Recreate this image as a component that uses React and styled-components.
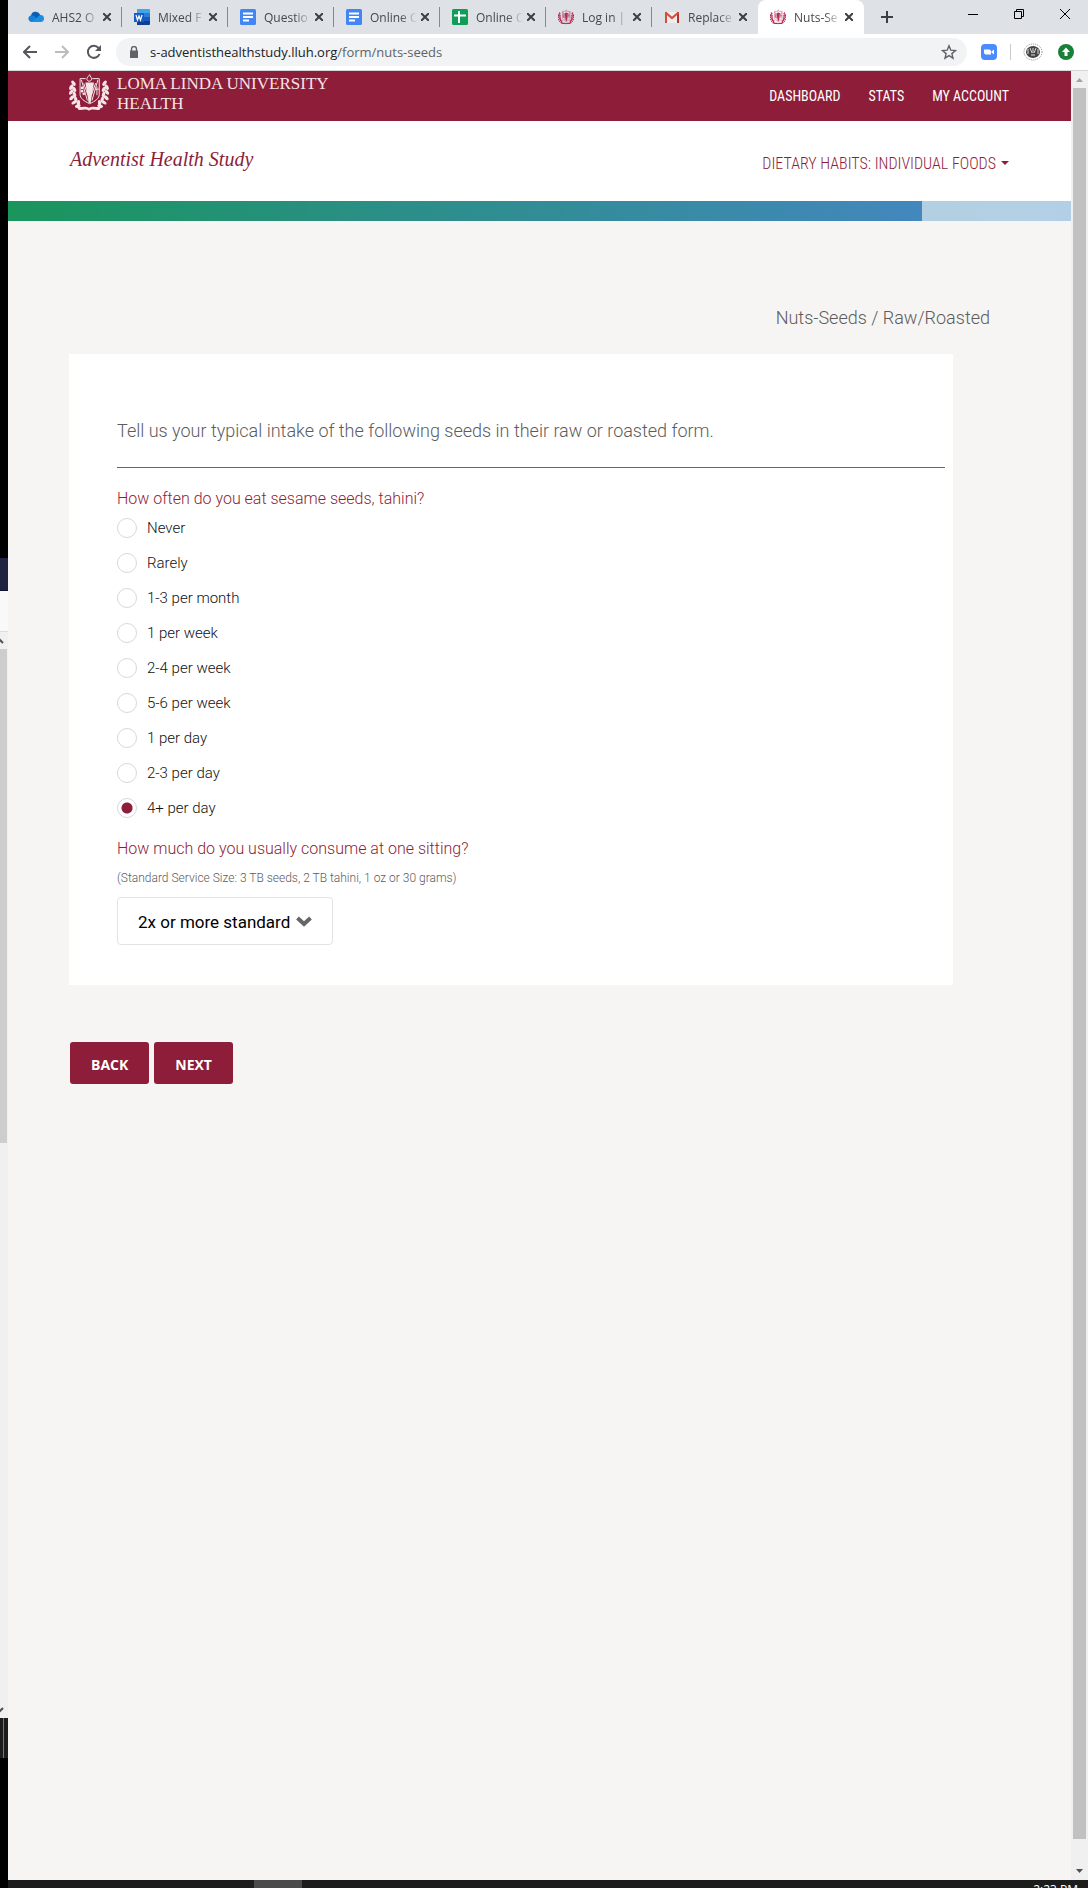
import React, { useState } from 'react';
import styled, { createGlobalStyle } from 'styled-components';

const maroon = '#8d1d38';
const uiFont = '"Open Sans", "Noto Sans", sans-serif';
const narrowFont = '"Liberation Sans Narrow", "Roboto Condensed", Roboto, sans-serif';

const GlobalStyle = createGlobalStyle`
  * {
    box-sizing: border-box;
  }

  body {
    margin: 0;
    background: #f6f5f3;
    font-family: Roboto, "Liberation Sans", sans-serif;
    color: #5c5c5c;
  }
`;

/* Desktop */

const Desktop = styled.div`
  display: grid;
  grid-template-columns: 8px minmax(0, 1fr);
  min-height: 100vh;
`;

const Behind = styled.div`
  display: flex;
  flex-direction: column;
  background: #000;
  overflow: hidden;
`;

const Slice = styled.div`
  height: ${props => props.$height}px;
  background: ${props => props.$color};
  border-bottom: ${props => (props.$line ? `1px solid ${props.$line}` : 'none')};
`;

const BehindThumb = styled(Slice)`
  border-right: 1px solid #f0f0f0;
`;

const BehindTask = styled(Slice)`
  border-left: 3px solid #1c1c1c;
  box-shadow: inset 1px 0 #777;
`;

const BehindArrow = styled.svg`
  display: block;
  flex: none;
  width: 8px;
  height: 17px;
  background: #f0f0f0;
`;

const Window = styled.div`
  display: flex;
  flex-direction: column;
`;

/* Browser chrome */

const TabStrip = styled.div`
  display: flex;
  height: 34px;
  padding-left: 8px;
  background: #dee1e6;
  font-family: ${uiFont};
  font-size: 12px;
`;

const Tab = styled.div`
  display: flex;
  flex: 0 1 106px;
  align-items: center;
  min-width: 0;
  padding: 0 11px 0 12px;
  border-radius: 8px 8px 0 0;
  color: #45494d;
  background: ${props => (props.$active ? '#fff' : 'transparent')};
`;

const TabLine = styled.span`
  align-self: center;
  width: 1px;
  height: 20px;
  margin-left: -1px;
  background: ${props => (props.$hidden ? 'transparent' : '#85888c')};
`;

const Favicon = styled.svg`
  flex: none;
  width: 16px;
  height: 16px;
`;

const TabTitle = styled.span`
  flex: 1;
  margin: 0 4px 0 8px;
  overflow: hidden;
  white-space: nowrap;
  mask-image: linear-gradient(to right, #000 65%, transparent);
`;

const IconButton = styled.button`
  display: flex;
  flex: none;
  align-items: center;
  justify-content: center;
  width: ${props => props.$width}px;
  height: ${props => props.$height || 28}px;
  padding: 0;
  border: 0;
  background: none;
  color: ${props => props.$color || '#5f6368'};
`;

const NewTab = styled(IconButton)`
  align-self: center;
  margin-left: 9px;
`;

const WindowControls = styled.div`
  display: flex;
  margin-left: auto;
`;

const Toolbar = styled.div`
  display: flex;
  align-items: center;
  height: 37px;
  padding: 0 8px 0 6px;
  border-bottom: 1px solid #d5d7da;
  background: #fff;
`;

const AddressBar = styled.div`
  display: flex;
  flex: 1;
  align-items: center;
  height: 28px;
  margin: 0 14px 0 6px;
  padding: 0 4px 0 12px;
  border-radius: 14px;
  background: #f1f3f4;
  font-family: ${uiFont};
  font-size: 13px;
`;

const Url = styled.span`
  flex: 1;
  margin-left: 10px;
  color: #5f6368;

  b {
    font-weight: 400;
    color: #202124;
  }
`;

const ToolbarLine = styled.span`
  width: 1px;
  height: 16px;
  margin: 0 12px 0 13px;
  background: #c8cacd;
`;

/* Page */

const Viewport = styled.div`
  display: flex;
  flex: 1;
`;

const Page = styled.div`
  flex: 1;
  min-width: 0;
`;

const Scrollbar = styled.div`
  display: flex;
  flex-direction: column;
  width: 17px;
  background: #f0f0f0;
`;

const ScrollThumb = styled.div`
  flex: 1;
  margin: 0 2px 24px;
  background: #c1c1c1;
`;

const Header = styled.header`
  display: flex;
  align-items: flex-start;
  justify-content: space-between;
  height: 50px;
  padding: 3px 62px 0 61px;
  background: ${maroon};
  color: #fff;
`;

const Brand = styled.a`
  display: flex;
  gap: 8px;
  color: #f5e4e8;
  text-decoration: none;
`;

const BrandName = styled.span`
  font-family: "Liberation Serif", serif;
  font-size: 17px;
  line-height: 20px;
`;

const Nav = styled.nav`
  display: flex;
  gap: 28px;
  padding-top: 12px;
  font-family: ${narrowFont};
  font-size: 14px;
  line-height: 20px;

  a {
    color: inherit;
    text-decoration: none;
  }
`;

const SubHeader = styled.div`
  display: flex;
  align-items: center;
  justify-content: space-between;
  height: 80px;
  padding: 0 62px 0 62px;
  background: #fff;
  color: ${maroon};
`;

const StudyName = styled.h1`
  margin: 0;
  padding-bottom: 4px;
  font-family: "Liberation Serif", serif;
  font-size: 20px;
  font-style: italic;
  font-weight: 400;
`;

const SectionButton = styled.button`
  display: flex;
  align-items: center;
  gap: 5px;
  padding: 4px 0 0;
  border: 0;
  background: none;
  color: inherit;
  font-family: ${narrowFont};
  font-size: 16px;
  font-weight: 300;
`;

const Progress = styled.div`
  height: 20px;
  background: linear-gradient(to right, #abd6c4, #b3cfe6);
`;

const ProgressFill = styled.div`
  height: 100%;
  background: linear-gradient(to right, #1a955c, #2a8f85 40%, #4387be);
`;

const Main = styled.main`
  padding: 84px 61px 60px;
`;

const Crumb = styled.p`
  margin: 0 20px 23px 0;
  font-size: 18px;
  font-weight: 300;
  line-height: 26px;
  text-align: right;
`;

const Card = styled.section`
  margin-right: 57px;
  padding: 64px 8px 40px 48px;
  background: #fff;
`;

const Intro = styled.p`
  margin: 0;
  padding-bottom: 23px;
  border-bottom: 1px solid #666;
  font-size: 18px;
  font-weight: 300;
  line-height: 26px;
`;

const Question = styled.fieldset`
  margin: 19px 0 12px;
  padding: 0;
  border: 0;
`;

const questionText = `
  display: block;
  padding: 0;
  color: ${maroon};
  font-size: 16px;
  font-weight: 300;
  line-height: 24px;
`;

const Legend = styled.legend`
  ${questionText}
`;

const SelectLabel = styled.label`
  ${questionText}
`;

const Choice = styled.label`
  display: flex;
  align-items: center;
  gap: 10px;
  height: 35px;
  color: #111;
  font-size: 15px;
  font-weight: 300;
`;

const Choices = styled.div`
  margin-top: -1px;
`;

const Radio = styled.input`
  appearance: none;
  width: 20px;
  height: 20px;
  margin: 0;
  border: 1px solid #d8d8d8;
  border-radius: 50%;
  background: #fff;

  &:checked {
    background: radial-gradient(circle, ${maroon} 5px, #fff 6px);
  }
`;

const Hint = styled.p`
  margin: 7px 0 9px;
  font-size: 12px;
  font-weight: 300;
  line-height: 20px;
`;

const SelectWrap = styled.div`
  position: relative;
  width: 216px;
  color: #666;

  svg {
    position: absolute;
    top: 19px;
    right: 21px;
    pointer-events: none;
  }
`;

const Select = styled.select`
  appearance: none;
  width: 100%;
  height: 48px;
  padding: 2px 36px 0 20px;
  border: 1px solid #e3e3e3;
  border-radius: 4px;
  background: #fff;
  color: #000;
  font-family: Roboto, sans-serif;
  font-size: 17px;
`;

const Actions = styled.div`
  display: flex;
  gap: 5px;
  margin: 57px 0 0 1px;
`;

const Button = styled.button`
  height: 42px;
  padding: 2px 21px 0;
  border: 0;
  border-radius: 3px;
  background: ${maroon};
  color: #fff;
  font-family: "Open Sans", sans-serif;
  font-size: 14px;
  font-weight: 700;
`;

const Taskbar = styled.div`
  display: flex;
  justify-content: space-between;
  height: 8px;
  padding: 0 10px 0 246px;
  overflow: hidden;
  background: #1c1c1c;
  color: #fff;
  font-family: ${uiFont};
  font-size: 12px;
  line-height: 20px;
`;

const TaskItem = styled.span`
  width: 48px;
  background: #4a4a4a;
`;

/* Icons */

const leaves = [
  [13, 28, -35], [6, 40, 25], [15, 46, -30], [6, 55, 35], [16, 62, -20],
  [8, 72, 45], [20, 77, -15], [15, 86, 60], [28, 88, 5], [26, 97, 75],
];

const Wreath = () => leaves.map(([x, y, turn]) => (
  <ellipse key={y} cx={x} cy={y} rx="5" ry="9" transform={`rotate(${turn} ${x} ${y})`} />
));

function Crest({ width, height, color, title }) {
  return (
    <svg width={width} height={height} viewBox="0 0 120 112" fill={color} role="img" aria-label={title}>
      <Wreath />
      <g transform="translate(120 0) scale(-1 1)"><Wreath /></g>
      <path d="M33 14h17M70 14h21v48c0 12-12 20-29 28-17-8-29-16-29-28V14" fill="none" stroke={color} strokeWidth="3" />
      <path d="M37 18l18 62M87 18L69 80M44 28l12 34M80 28L68 62" fill="none" stroke={color} strokeWidth="3" />
      <path d="M49 26h26l-10 62h-6z" />
      <path d="M57 21c-8-6 0-12 5-19 0 6 9 9 5 16-2 4-6 5-10 3z" fill="none" stroke={color} strokeWidth="3" />
      <path d="M84 38v26M79 46h11" fill="none" stroke={color} strokeWidth="3" />
      <circle cx="39" cy="42" r="4" />
      <circle cx="39" cy="52" r="4" />
      <circle cx="44" cy="60" r="4" />
      <path d="M22 98c12 6 22-3 38 4 16-7 26 2 38-4l-6 10c-10 3-20-4-32 3-12-7-22 0-32-3z" />
    </svg>
  );
}

const CloseIcon = () => (
  <svg width="8" height="8" viewBox="0 0 8 8" stroke="#3c4043" strokeWidth="2">
    <path d="M0 0l8 8M8 0l-8 8" />
  </svg>
);

const CloudIcon = () => (
  <Favicon viewBox="0 0 16 16">
    <path d="M3 6.500a4.800 4.800 0 0 1 9-1l1 3-7 4z" fill="#0a5eb5" />
    <path d="M3.500 13a3.400 3.400 0 1 1 2.500-6l7 5.500z" fill="#1480d8" />
    <path d="M12 6a3.500 3.500 0 0 1 1 7H3.500L9 8.500z" fill="#1c90e0" />
  </Favicon>
);

const WordIcon = () => (
  <Favicon viewBox="0 0 16 16">
    <path d="M3 0h12a1 1 0 0 1 1 1v4H3z" fill="#41a5ee" />
    <path d="M3 4h13v4H3z" fill="#2b7cd3" />
    <path d="M3 8h13v4H3z" fill="#185abd" />
    <path d="M3 12h13v3a1 1 0 0 1-1 1H3z" fill="#103f91" />
    <path d="M0 4h10v9H0z" fill="#185abd" />
    <path d="M2 6l1.500 5L5 7l1.500 4L8 6" fill="none" stroke="#fff" strokeWidth="1.200" />
  </Favicon>
);

const DocIcon = () => (
  <Favicon viewBox="0 0 16 16">
    <rect width="16" height="16" rx="1.500" fill="#4285f4" />
    <path d="M3 4.500h10M3 8h10M3 11.500h6" stroke="#fff" strokeWidth="1.800" />
  </Favicon>
);

const SheetIcon = () => (
  <Favicon viewBox="0 0 16 16">
    <rect width="16" height="16" rx="1.500" fill="#0f9d58" />
    <path d="M2 6.500h12M7 2v12" stroke="#fff" strokeWidth="2" />
  </Favicon>
);

const MailIcon = () => (
  <Favicon viewBox="0 0 16 16">
    <path d="M2 3h12v11H2z" fill="#eee" />
    <path d="M1 3h2v11H1z" fill="#d54b3d" />
    <path d="M13 3h2v11h-2z" fill="#b63524" />
    <path d="M1.500 3.500L8 9l6.500-5.500" fill="none" stroke="#dc4b3e" strokeWidth="2.200" />
  </Favicon>
);

const SchoolIcon = () => <Crest width="16" height="16" color="#b72b55" title="Loma Linda" />;

const tabs = [
  { title: 'AHS2 O', Icon: CloudIcon },
  { title: 'Mixed F', Icon: WordIcon },
  { title: 'Questio', Icon: DocIcon },
  { title: 'Online C', Icon: DocIcon },
  { title: 'Online C', Icon: SheetIcon },
  { title: 'Log in |', Icon: SchoolIcon },
  { title: 'Replace', Icon: MailIcon },
  { title: 'Nuts-Se', Icon: SchoolIcon, active: true },
];

const frequencies = [
  'Never',
  'Rarely',
  '1-3 per month',
  '1 per week',
  '2-4 per week',
  '5-6 per week',
  '1 per day',
  '2-3 per day',
  '4+ per day',
];

function BrowserBar() {
  return (
    <>
      <TabStrip>
        {tabs.map(({ title, Icon, active }, i) => (
          <React.Fragment key={i}>
            <Tab $active={active}>
              <Icon />
              <TabTitle>{title}</TabTitle>
              <IconButton $width={8} aria-label="Close tab"><CloseIcon /></IconButton>
            </Tab>
            <TabLine $hidden={i > 5} />
          </React.Fragment>
        ))}
        <NewTab $width={28} aria-label="New tab">
          <svg width="12" height="12" viewBox="0 0 12 12" stroke="#3c4043" strokeWidth="2"><path d="M6 0v12M0 6h12" /></svg>
        </NewTab>
        <WindowControls>
          <IconButton $width={46} aria-label="Minimize">
            <svg width="10" height="10" viewBox="0 0 10 10" stroke="#000"><path d="M0 5.500h10" /></svg>
          </IconButton>
          <IconButton $width={46} aria-label="Restore">
            <svg width="10" height="10" viewBox="0 0 10 10" stroke="#000" fill="none"><path d="M.5 2.500h7v7h-7zM2.500 2.500v-2h7v7h-2" /></svg>
          </IconButton>
          <IconButton $width={46} aria-label="Close">
            <svg width="10" height="10" viewBox="0 0 10 10" stroke="#000"><path d="M0 0l10 10M10 0L0 10" /></svg>
          </IconButton>
        </WindowControls>
      </TabStrip>
      <Toolbar>
        <IconButton $width={32} aria-label="Back">
          <svg width="14" height="14" viewBox="0 0 14 14" stroke="#55585c" strokeWidth="2" fill="none"><path d="M14 7H1M7 1L1 7l6 6" /></svg>
        </IconButton>
        <IconButton $width={32} aria-label="Forward">
          <svg width="14" height="14" viewBox="0 0 14 14" stroke="#babcbe" strokeWidth="2" fill="none"><path d="M0 7h13M7 1l6 6-6 6" /></svg>
        </IconButton>
        <IconButton $width={32} aria-label="Reload">
          <svg width="16" height="16" viewBox="0 0 16 16" fill="none"><path d="M13.500 10A6 6 0 1 1 12.500 4" stroke="#55585c" strokeWidth="2" /><path d="M15 1v6H9z" fill="#55585c" /></svg>
        </IconButton>
        <AddressBar>
          <svg width="12" height="12" viewBox="0 0 12 12" fill="none"><path d="M2 4.500h8V12H2z" fill="#5f6368" /><path d="M3.500 5V3a2.500 2.500 0 0 1 5 0v2" stroke="#5f6368" strokeWidth="1.400" /></svg>
          <Url><b>s-adventisthealthstudy.lluh.org</b>/form/nuts-seeds</Url>
          <IconButton $width={28} aria-label="Bookmark">
            <svg width="16" height="16" viewBox="0 0 16 16" fill="none" stroke="#5f6368" strokeWidth="1.400"><path d="M8 1.800l1.800 4.400 4.700.4-3.600 3 1.100 4.600L8 11.700l-4 2.500 1.100-4.600-3.600-3 4.700-.4z" /></svg>
          </IconButton>
        </AddressBar>
        <IconButton $width={16} aria-label="Video meeting">
          <svg width="16" height="16" viewBox="0 0 16 16"><rect width="16" height="16" rx="4" fill="#4a8cff" /><path d="M3 5.500h5a2 2 0 0 1 2 2v3H5a2 2 0 0 1-2-2zM10.500 7.500l2.500-2v5l-2.500-2z" fill="#fff" /></svg>
        </IconButton>
        <ToolbarLine />
        <IconButton $width={20} aria-label="Profile">
          <svg width="20" height="18" viewBox="0 0 20 18">
            <ellipse cx="10" cy="9" rx="9" ry="8" fill="none" stroke="#888" strokeDasharray="1 1" />
            <ellipse cx="10" cy="9" rx="7" ry="6" fill="#444" />
            <path d="M5 6v5M15 6v5M7 5l2 5M13 5l-2 5M8 12h4M10 5v5" stroke="#ddd" />
          </svg>
        </IconButton>
        <NewTab $width={28} aria-label="Update">
          <svg width="16" height="16" viewBox="0 0 16 16"><circle cx="8" cy="8" r="8" fill="#188038" /><path d="M8 3.500l4 4.500H9.500v4h-3V8H4z" fill="#fff" /></svg>
        </NewTab>
      </Toolbar>
    </>
  );
}

function App() {
  const [frequency, setFrequency] = useState('4+ per day');
  const [amount, setAmount] = useState('2x');

  return (
    <Desktop>
      <GlobalStyle />
      <Behind>
        <Slice $height={558} $color="#000" />
        <Slice $height={33} $color="#1f2240" $line="#11142c" />
        <Slice $height={41} $color="#f9f9f9" $line="#ddd" />
        <BehindArrow viewBox="0 0 8 17"><path d="M-3 11l3-3 3 3" fill="none" stroke="#505050" strokeWidth="2" /></BehindArrow>
        <BehindThumb $height={494} $color="#cdcdcd" />
        <Slice $height={558} $color="#f0f0f0" />
        <BehindArrow viewBox="0 0 8 17"><path d="M-3 7l3 3 3-3" fill="none" stroke="#505050" strokeWidth="2" /></BehindArrow>
        <BehindTask $height={40} $color="#1c1c1c" />
      </Behind>
      <Window>
        <BrowserBar />
        <Viewport>
          <Page>
            <Header>
              <Brand href="#home">
                <Crest width="40" height="37" color="#f5e4e8" title="Seal" />
                <BrandName>LOMA LINDA UNIVERSITY<br />HEALTH</BrandName>
              </Brand>
              <Nav>
                <a href="#dashboard">DASHBOARD</a>
                <a href="#stats">STATS</a>
                <a href="#account">MY ACCOUNT</a>
              </Nav>
            </Header>
            <SubHeader>
              <StudyName>Adventist Health Study</StudyName>
              <SectionButton>
                DIETARY HABITS: INDIVIDUAL FOODS
                <svg width="8" height="4" viewBox="0 0 8 4" fill={maroon}><path d="M0 0h8L4 4z" /></svg>
              </SectionButton>
            </SubHeader>
            <Progress>
              <ProgressFill style={{ width: '86%' }} />
            </Progress>
            <Main>
              <Crumb>Nuts-Seeds / Raw/Roasted</Crumb>
              <Card>
                <Intro>Tell us your typical intake of the following seeds in their raw or roasted form.</Intro>
                <Question>
                  <Legend>How often do you eat sesame seeds, tahini?</Legend>
                  <Choices>
                    {frequencies.map(item => (
                      <Choice key={item}>
                        <Radio
                          type="radio"
                          name="frequency"
                          value={item}
                          checked={frequency === item}
                          onChange={e => setFrequency(e.target.value)}
                        />
                        {item}
                      </Choice>
                    ))}
                  </Choices>
                </Question>
                <SelectLabel htmlFor="amount">How much do you usually consume at one sitting?</SelectLabel>
                <Hint>(Standard Service Size: 3 TB seeds, 2 TB tahini, 1 oz or 30 grams)</Hint>
                <SelectWrap>
                  <Select id="amount" value={amount} onChange={e => setAmount(e.target.value)}>
                    <option value="2x">2x or more standard</option>
                  </Select>
                  <svg width="16" height="11" viewBox="0 0 16 11" fill="none" stroke="currentColor" strokeWidth="4"><path d="M1.500 2L8 8l6.500-6" /></svg>
                </SelectWrap>
              </Card>
              <Actions>
                <Button type="button">BACK</Button>
                <Button type="button">NEXT</Button>
              </Actions>
            </Main>
          </Page>
          <Scrollbar>
            <svg width="17" height="17" viewBox="0 0 17 17"><path d="M5 11h7L8.500 7z" fill="#a3a3a3" /></svg>
            <ScrollThumb />
            <svg width="17" height="17" viewBox="0 0 17 17"><path d="M5 6h7l-3.500 4z" fill="#505050" /></svg>
          </Scrollbar>
        </Viewport>
        <Taskbar>
          <TaskItem />
          <span>2:23 PM</span>
        </Taskbar>
      </Window>
    </Desktop>
  );
}

export default App;
